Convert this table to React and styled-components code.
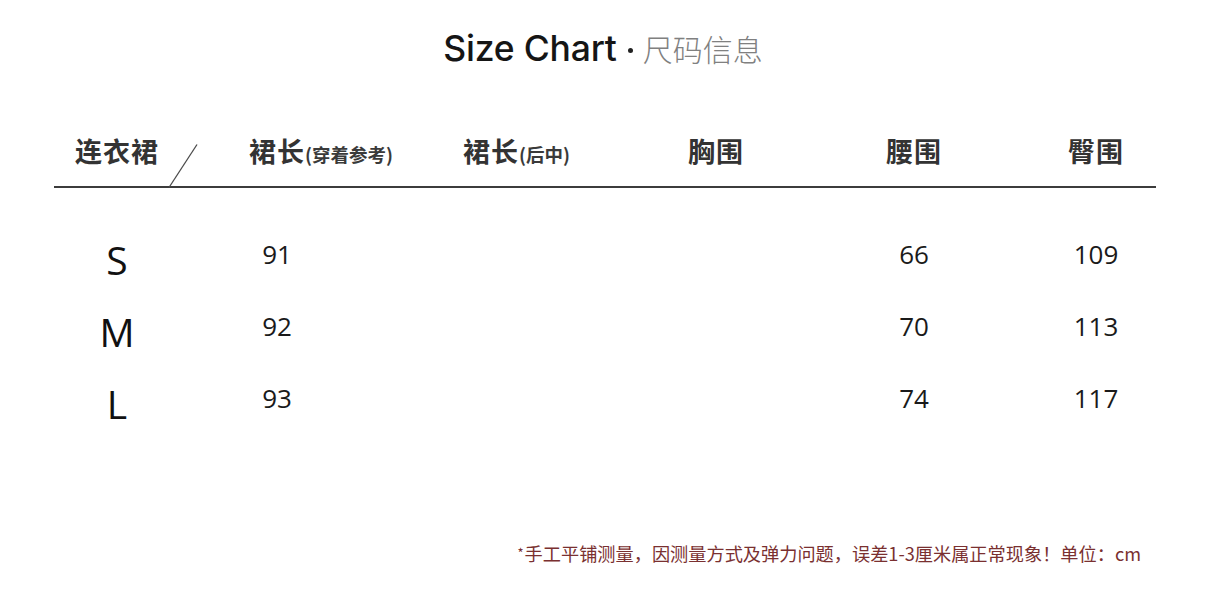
import React from 'react';
import styled, { createGlobalStyle } from "styled-components";

const GlobalStyle = createGlobalStyle`
  html, body {
    margin: 0;
    padding: 0;
    background: #ffffff;
  }
`;

const cjk = `"Noto Sans CJK SC", "Noto Sans", sans-serif`;
const latin = `"Open Sans", "Noto Sans CJK SC", sans-serif`;

const columns = [154, 166, 262, 188, 208, 156];

const headers = [
  { label: '连衣裙' },
  { label: '裙长', note: '(穿着参考)' },
  { label: '裙长', note: '(后中)' },
  { label: '胸围' },
  { label: '腰围' },
  { label: '臀围' },
];

const rows = [
  { size: 'S', values: ['91', '', '', '66', '109'] },
  { size: 'M', values: ['92', '', '', '70', '113'] },
  { size: 'L', values: ['93', '', '', '74', '117'] },
];

const App = () => {
  return <Page>
    <GlobalStyle />
    <Title>
      <TitleEn>Size Chart</TitleEn>
      <Dot />
      <TitleCn>尺码信息</TitleCn>
    </Title>

    <Table>
      <HeadRow>
        {headers.map((h, i) => (
          <HeadCell key={i}>
            <span />
            <HeadLabel>{h.label}</HeadLabel>
            {h.note ? <HeadNote>{h.note}</HeadNote> : <span />}
          </HeadCell>
        ))}
        <Slash viewBox="0 0 30 44" width="30" height="44">
          <line x1="29" y1="0.5" x2="1" y2="43.5" stroke="#4a4a4a" strokeWidth="1.3" />
        </Slash>
      </HeadRow>
      <Divider />

      <Body>
        {rows.map(r => (
          <Row key={r.size}>
            <SizeCell>{r.size}</SizeCell>
            {r.values.map((v, i) => <ValueCell key={i}>{v}</ValueCell>)}
          </Row>
        ))}
      </Body>
    </Table>

    <Footnote><Star>*</Star>手工平铺测量，因测量方式及弹力问题，误差1-3厘米属正常现象！单位：cm</Footnote>
  </Page>
}

export default App;

const Page = styled.div`
  width: 1206px;
  height: 593px;
  box-sizing: border-box;
  padding: 28px 0 28px 0;
  display: flex;
  flex-direction: column;
  background: #ffffff;
  overflow: hidden;
`;

const Title = styled.div`
  height: 40px;
  display: flex;
  align-items: center;
  justify-content: center;
`;

const TitleEn = styled.span`
  font-family: "Inter", "Liberation Sans", sans-serif;
  font-weight: 500;
  font-size: 35.5px;
  color: #151515;
  letter-spacing: -0.2px;
`;

const Dot = styled.span`
  width: 5px;
  height: 5px;
  border-radius: 50%;
  background: #222;
  margin: 4px 10px 0 11px;
`;

const TitleCn = styled.span`
  font-family: ${cjk};
  font-weight: 300;
  font-size: 30px;
  color: #808080;
  line-height: 1;
`;

const Table = styled.div`
  margin-top: 54px;
`;

const HeadRow = styled.div`
  position: relative;
  display: grid;
  grid-template-columns: ${columns.map(c => c + 'px').join(' ')};
  height: 56px;
  padding-left: 40px;
  align-items: center;
`;

const HeadCell = styled.div`
  display: grid;
  grid-template-columns: minmax(0, 1fr) auto minmax(0, 1fr);
  align-items: baseline;
  white-space: nowrap;
`;

const HeadLabel = styled.span`
  font-family: ${cjk};
  font-weight: 700;
  font-size: 27px;
  color: #333333;
  letter-spacing: 1px;
`;

const HeadNote = styled.span`
  font-family: ${cjk};
  font-weight: 700;
  font-size: 18.5px;
  color: #3a3a3a;
  justify-self: start;
`;

const Slash = styled.svg`
  position: absolute;
  left: 168px;
  top: 22px;
  overflow: visible;
`;

const Divider = styled.div`
  margin: 8px 0 0 54px;
  width: 1102px;
  height: 1.5px;
  background: #3c3c3c;
`;

const Body = styled.div`
  margin-top: 36px;
`;

const Row = styled.div`
  display: grid;
  grid-template-columns: ${columns.map(c => c + 'px').join(' ')};
  height: 72px;
  padding-left: 40px;
  align-items: center;
  justify-items: center;
`;

const SizeCell = styled.div`
  font-family: ${latin};
  font-size: 39px;
  color: #111111;
`;

const ValueCell = styled.div`
  font-family: ${latin};
  font-size: 26px;
  color: #1a1a1a;
  padding-bottom: 12px;
`;

const Footnote = styled.div`
  margin-top: auto;
  align-self: flex-end;
  margin-right: 65px;
  font-family: ${cjk};
  font-weight: 400;
  font-size: 18.2px;
  line-height: 24px;
  color: #7a3030;
  white-space: nowrap;
`;

const Star = styled.span`
  font-size: 13px;
  vertical-align: 3px;
  margin-right: 1px;
`;
